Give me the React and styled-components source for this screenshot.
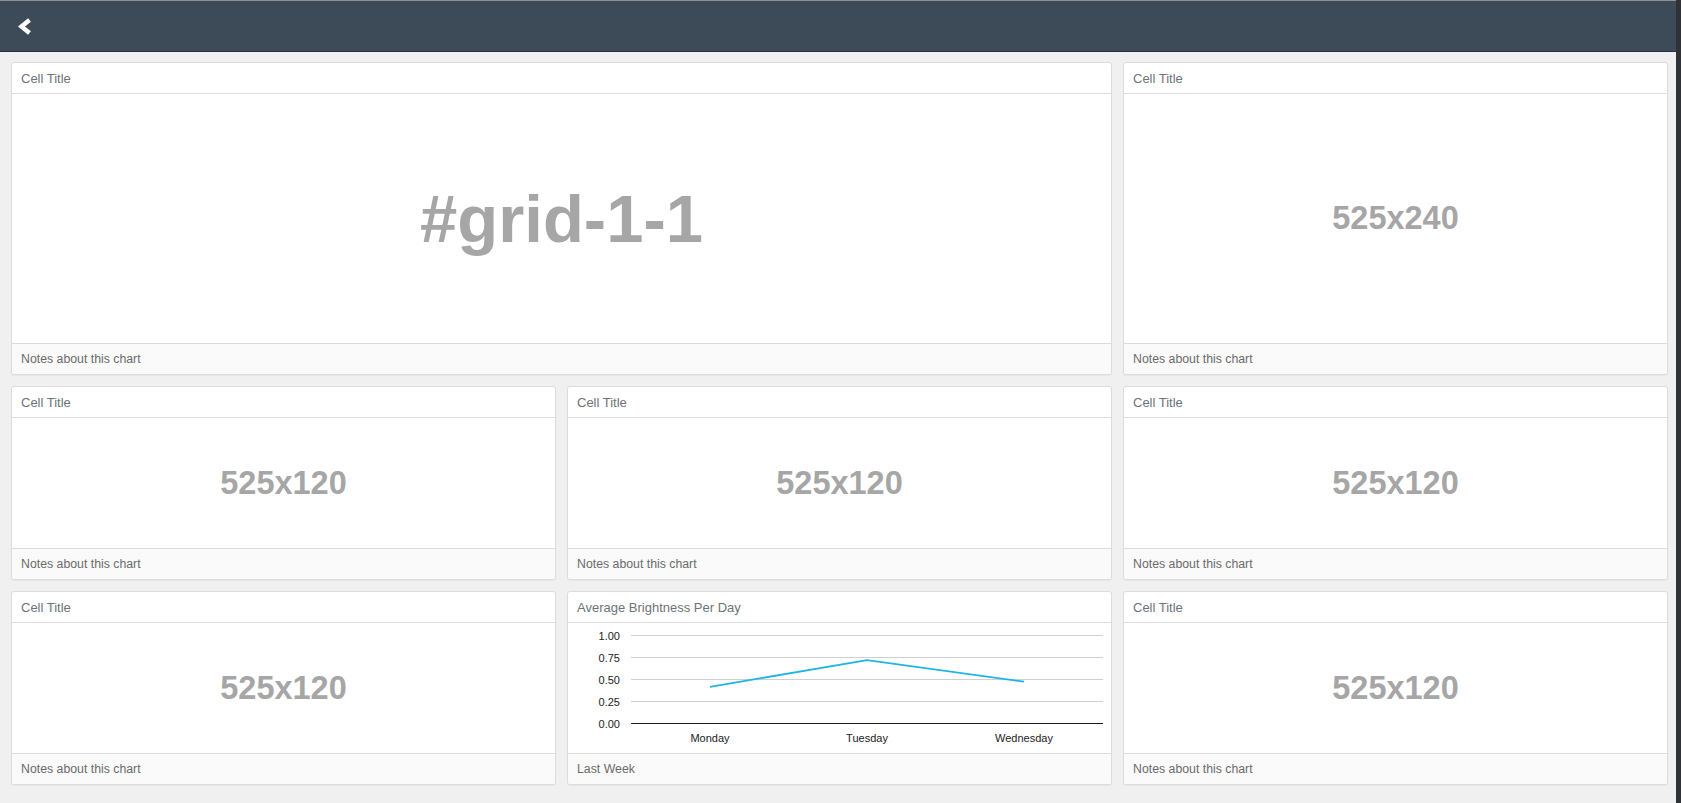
import React from "react";
import styled, { createGlobalStyle } from "styled-components";

const GlobalStyle = createGlobalStyle`
  html, body {
    margin: 0;
    padding: 0;
    background: #f0f0f0;
  }
  body {
    font-family: "Helvetica Neue", "Liberation Sans", Arial, sans-serif;
  }
`;

const Page = styled.div`
  min-height: 803px;
  background: #f0f0f0;
  border-right: 5px solid #2f3236;
  box-sizing: border-box;
`;

const TopBar = styled.header`
  height: 50px;
  background: #3d4b59;
  border-top: 1px solid #8e9296;
  border-bottom: 1px solid #27313a;
  display: flex;
  align-items: center;
  padding-left: 16px;
`;

const BackButton = styled.button`
  background: none;
  border: 0;
  padding: 0;
  width: 16px;
  height: 18px;
  display: flex;
  align-items: center;
  justify-content: center;
  cursor: pointer;
`;

const Grid = styled.main`
  display: grid;
  grid-template-columns: repeat(3, 1fr);
  grid-template-rows: 313px 194px 194px;
  gap: 11px;
  padding: 10px 8px 18px 11px;
`;

const Card = styled.section`
  grid-column: span ${(p) => p.span || 1};
  display: flex;
  flex-direction: column;
  background: #fff;
  border: 1px solid #dcdcdc;
  border-radius: 3px;
  box-shadow: 0 1px 1px rgba(0, 0, 0, 0.04);
  overflow: hidden;
`;

const CardTitle = styled.div`
  height: 30px;
  flex: none;
  display: flex;
  align-items: center;
  padding: 0 9px;
  border-bottom: 1px solid #dcdcdc;
  font-size: 13px;
  font-weight: 300;
  color: #6d737a;
`;

const CardBody = styled.div`
  flex: 1;
  display: flex;
  align-items: center;
  justify-content: center;
  min-height: 0;
`;

const Placeholder = styled.span`
  font-family: "Liberation Sans", Arial, sans-serif;
  font-weight: 700;
  font-size: ${(p) => (p.big ? "67px" : "32.5px")};
  color: #a6a6a6;
`;

const CardNotes = styled.div`
  height: 30px;
  flex: none;
  display: flex;
  align-items: center;
  padding: 0 9px;
  border-top: 1px solid #dcdcdc;
  background: #fafafa;
  font-size: 12.3px;
  color: #6b6b6b;
`;

const ChartSvg = styled.svg`
  display: block;
  width: 100%;
  height: 100%;
  font-family: "Liberation Sans", Arial, sans-serif;
  font-size: 11px;
`;

const ticks = [1, 0.75, 0.5, 0.25, 0];
const days = [
  { label: "Monday", x: 142, v: 0.416 },
  { label: "Tuesday", x: 299, v: 0.72 },
  { label: "Wednesday", x: 456, v: 0.475 },
];
const yOf = (v) => 100.5 - v * 88;

function BrightnessChart() {
  return (
    <ChartSvg viewBox="0 0 543 130" preserveAspectRatio="none">
      {ticks.map((t) => (
        <g key={t}>
          <line
            x1="63"
            x2="535"
            y1={yOf(t)}
            y2={yOf(t)}
            stroke={t === 0 ? "#1e1e1e" : "#cfcfcf"}
            strokeWidth="1"
          />
          <text x="52" y={yOf(t) + 4} textAnchor="end" fill="#222">
            {t.toFixed(2)}
          </text>
        </g>
      ))}
      {days.map((d) => (
        <text key={d.label} x={d.x} y="118.5" textAnchor="middle" fill="#222">
          {d.label}
        </text>
      ))}
      <polyline
        points={days.map((d) => `${d.x},${yOf(d.v)}`).join(" ")}
        fill="none"
        stroke="#1fb5e3"
        strokeWidth="1.8"
      />
    </ChartSvg>
  );
}

function Cell({ title = "Cell Title", notes = "Notes about this chart", span, children }) {
  return (
    <Card span={span}>
      <CardTitle>{title}</CardTitle>
      <CardBody>{children}</CardBody>
      <CardNotes>{notes}</CardNotes>
    </Card>
  );
}

export default function App() {
  return (
    <Page>
      <GlobalStyle />
      <TopBar>
        <BackButton aria-label="Back">
          <svg width="15" height="17" viewBox="0 0 15 17">
            <polyline
              points="12.5,2 4.5,8.5 12.5,15"
              fill="none"
              stroke="#fff"
              strokeWidth="4.5"
              strokeLinejoin="miter"
            />
          </svg>
        </BackButton>
      </TopBar>
      <Grid>
        <Cell span={2}>
          <Placeholder big>#grid-1-1</Placeholder>
        </Cell>
        <Cell>
          <Placeholder>525x240</Placeholder>
        </Cell>
        <Cell>
          <Placeholder>525x120</Placeholder>
        </Cell>
        <Cell>
          <Placeholder>525x120</Placeholder>
        </Cell>
        <Cell>
          <Placeholder>525x120</Placeholder>
        </Cell>
        <Cell>
          <Placeholder>525x120</Placeholder>
        </Cell>
        <Cell title="Average Brightness Per Day" notes="Last Week">
          <BrightnessChart />
        </Cell>
        <Cell>
          <Placeholder>525x120</Placeholder>
        </Cell>
      </Grid>
    </Page>
  );
}
